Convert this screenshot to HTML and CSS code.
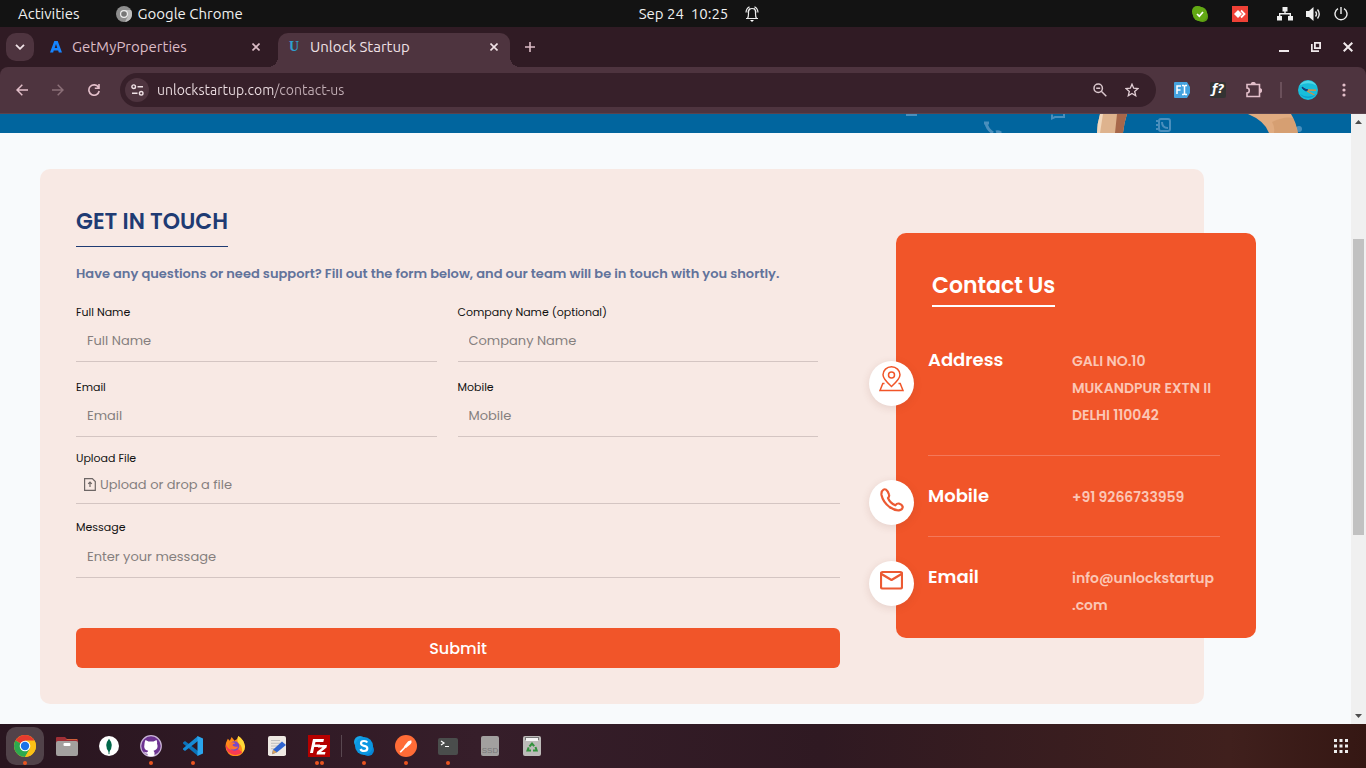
FILE: index.html
```html
<!DOCTYPE html>
<html lang="en">
<head>
<meta charset="utf-8">
<meta name="viewport" content="width=device-width, initial-scale=1">
<title>Unlock Startup</title>
<link rel="stylesheet" href="styles.css">
</head>
<body>
<header class="topbar">
  <div class="topbar-left">
    <button class="plain" type="button">Activities</button>
    <button class="plain app-menu" type="button">
      <svg width="16" height="16" viewBox="0 0 16 16"><circle cx="8" cy="8" r="8" fill="#8d8d8d"/><path d="M8 4h7a8 8 0 0 1-6 12l3-6z" fill="#bdbdbd"/><circle cx="8" cy="8" r="4" fill="#eee"/><circle cx="8" cy="8" r="2.8" fill="#777"/></svg>
      <span>Google Chrome</span>
    </button>
  </div>
  <div class="topbar-clock">
    <span>Sep 24&nbsp; 10:25</span>
    <svg width="14" height="16" viewBox="0 0 14 16" fill="none" stroke="#eee" stroke-width="1.2"><path d="M1 12.500h12M2.500 12.500Q3.500 11 3.500 7.500V6a3.500 3.500 0 0 1 7 0v1.500q0 3.500 1 5M1 6.500Q1.200 2.500 4.500 .8M13 6.500Q12.800 2.500 9.500 .8M3 6.500Q3 4 5 2.500M11 6.500Q11 4 9 2.500"/><path d="M5 14h4l-2 2z" fill="#fff" stroke="none"/></svg>
  </div>
  <div class="topbar-right">
    <svg width="16" height="16" viewBox="0 0 16 16"><rect width="11" height="11" rx="5" fill="#62a814"/><rect x="5" y="5" width="11" height="11" rx="5" fill="#5b9b12"/><circle cx="8" cy="8" r="7.300" fill="#62a814"/><path d="M5 8l2.300 2.200L11 6" fill="none" stroke="#fff" stroke-width="1.700"/></svg>
    <svg class="tray-red" width="16" height="16" viewBox="0 0 16 16"><path fill="#ef4136" d="M0 0h16v16H0z"/><path fill="#fff" d="M2 8l4-4 4 4-4 4z"/><path d="M9 4.500L12.500 8 9 11.500" fill="none" stroke="#fff" stroke-width="1.800"/></svg>
    <svg class="tray-net" width="16" height="14" viewBox="0 0 16 14" fill="#f0f0f0"><path d="M5.500 0h5v4.500H8.700V6H14v3h2v4.500h-5V9h1.600V7.400H3.400V9H5v4.500H0V9h2V6h5.300V4.500H5.500z"/></svg>
    <svg width="15" height="14" viewBox="0 0 15 14"><path fill="#f0f0f0" d="M0 4h3l4.500-4v14L3 10H0z"/><path d="M9.500 4.500q2 2.500 0 5M11.500 2.500q3.500 4.500 0 9" fill="none" stroke="#e8e8e8" stroke-width="1.400"/></svg>
    <svg width="14" height="14" viewBox="0 0 14 14" fill="none" stroke="#eee" stroke-width="1.400"><path d="M7 0v7M4 1.600a6 6 0 1 0 6 0"/></svg>
  </div>
</header>

<nav class="tabstrip" aria-label="Tabs">
  <button class="tab-search" type="button" aria-label="Search tabs"><svg width="10" height="6" viewBox="0 0 10 6" fill="none" stroke="#f0e2e6" stroke-width="1.800"><path d="M1 .8l4 4 4-4"/></svg></button>
  <div class="tab">
    <svg width="12" height="12" viewBox="0 0 12 12"><path fill="#1684ff" fill-rule="evenodd" d="M4.300 0h3.400L12 11.500H8.800L8.200 9.500H3.700L3.200 11.500H0zM6 3L4.700 7h2.600z"/></svg>
    <span class="tab-title">GetMyProperties</span>
    <button class="tab-close" type="button" aria-label="Close GetMyProperties"><svg width="8" height="8" viewBox="0 0 8 8" stroke="#dcbcc6" stroke-width="1.600"><path d="M.5.5l7 7M7.500.5l-7 7"/></svg></button>
  </div>
  <div class="tab tab-active">
    <span class="u-mark">U</span>
    <span class="tab-title">Unlock Startup</span>
    <button class="tab-close" type="button" aria-label="Close Unlock Startup"><svg width="8" height="8" viewBox="0 0 8 8" stroke="#f0e2e6" stroke-width="1.600"><path d="M.5.5l7 7M7.500.5l-7 7"/></svg></button>
  </div>
  <button class="new-tab" type="button" aria-label="New tab"><svg width="10" height="10" viewBox="0 0 10 10" stroke="#dcbcc6" stroke-width="1.600"><path d="M5 0v10M0 5h10"/></svg></button>
  <div class="window-buttons">
    <button type="button" aria-label="Minimize"><svg width="10" height="10" viewBox="0 0 10 10"><path fill="#f0e9eb" d="M0 8h10v2H0z"/></svg></button>
    <button type="button" aria-label="Restore"><svg width="10" height="10" viewBox="0 0 10 10" fill="none" stroke="#f0e9eb" stroke-width="1.800"><path d="M3.900.9h5.200v5.200H3.900z"/><path d="M.8 2v7.200H8"/></svg></button>
    <button type="button" aria-label="Close"><svg width="10" height="10" viewBox="0 0 10 10" stroke="#f0e9eb" stroke-width="2"><path d="M.7.7l8.600 8.600M9.300.7L.7 9.300"/></svg></button>
  </div>
</nav>

<div class="toolbar">
  <button class="tool" type="button" aria-label="Back"><svg width="12" height="12" viewBox="0 0 12 12" fill="none" stroke="#e3bfca" stroke-width="1.500"><path d="M12 6H1M6.300.7L1 6l5.300 5.300"/></svg></button>
  <button class="tool" type="button" aria-label="Forward"><svg width="12" height="12" viewBox="0 0 12 12" fill="none" stroke="#8b6f78" stroke-width="1.500"><path d="M0 6h11M5.700.7L11 6l-5.300 5.300"/></svg></button>
  <button class="tool" type="button" aria-label="Reload"><svg width="12" height="12" viewBox="0 0 12 12" fill="none" stroke="#e3bfca" stroke-width="1.600"><path d="M10.500 3.300A5.200 5.200 0 1 0 11.200 7M11 0v4.200H6.800"/></svg></button>
  <div class="omnibox">
    <button class="site-info" type="button" aria-label="Site information"><svg width="13" height="12" viewBox="0 0 13 12" fill="none" stroke="#f0e2e6" stroke-width="1.400"><circle cx="2.700" cy="2.700" r="1.800"/><path d="M6.500 2.700h5.500M1 9.300h5.500"/><circle cx="10.200" cy="9.300" r="1.800"/></svg></button>
    <input class="url" type="text" value="unlockstartup.com/contact-us" aria-label="Address">
    <button class="omni-action" type="button" aria-label="Zoom"><svg width="14" height="14" viewBox="0 0 14 14" fill="none" stroke="#d9c6cc" stroke-width="1.500"><circle cx="5.200" cy="5.200" r="4.200"/><path d="M8.300 8.300l5 5M3.200 5.200h4"/></svg></button>
    <button class="omni-action" type="button" aria-label="Bookmark"><svg width="14" height="14" viewBox="0 0 14 14" fill="none" stroke="#e3d0d6" stroke-width="1.300"><path d="M7 1.200l1.700 4 4.300.4-3.300 2.800 1 4.300L7 10.400l-3.700 2.300 1-4.300L1 5.600l4.300-.4z"/></svg></button>
  </div>
  <div class="extensions">
    <button class="tool" type="button" aria-label="Font extension"><svg width="16" height="16" viewBox="0 0 16 16"><path fill="#45a3df" d="M1 0h12l3 5v6l-3 5H1q-1 0-1-1V1q0-1 1-1z"/><path fill="none" stroke="#fff" stroke-width="1.500" d="M3 12V4h4M3 8h3.500M8 3.500h1.500l1 1 1-1H13M8 12.500h1.500l1-1 1 1H13M10.500 4.500v7"/></svg></button>
    <button class="tool" type="button" aria-label="Font finder"><span class="font-mark">ƒ?</span></button>
    <button class="tool" type="button" aria-label="Extensions"><svg width="16" height="16" viewBox="0 0 16 16" fill="none" stroke="#e3bfca" stroke-width="1.600"><path d="M1 2.500h12.500v12H1v-3.500c3 0 3-5 0-5z"/><path d="M5.500 2.500a1.800 1.800 0 0 1 3.600 0M13.500 6.700a1.800 1.800 0 0 1 0 3.600" fill="#e3bfca"/></svg></button>
    <span class="tool-divider"></span>
    <button class="tool" type="button" aria-label="Profile"><svg width="20" height="20" viewBox="0 0 20 20"><circle cx="10" cy="10" r="10" fill="#18bedb"/><path d="M1.500 5.500a10 10 0 0 1 17 0Q10 1 1.500 5.500z" fill="#4fd6e6"/><path d="M2 14q8 5 16 0a10 10 0 0 1-16 0z" fill="#0c9fd0"/><path d="M4 7l3 2 3 1-2 1-3-2z" fill="#153b79" stroke="#153b79"/><path d="M10 10l8 .2M9 11l7.500 4" stroke="#d89042" stroke-width="1.400"/></svg></button>
    <button class="tool" type="button" aria-label="Menu"><svg width="4" height="14" viewBox="0 0 4 14" fill="#e3bfca"><circle cx="2" cy="2" r="1.600"/><circle cx="2" cy="7" r="1.600"/><circle cx="2" cy="12" r="1.600"/></svg></button>
  </div>
</div>

<div class="viewport">
  <main class="page">
    <div class="banner">
      <svg width="451" height="19" viewBox="0 0 451 19">
        <g fill="none" stroke="#4a8fbd" stroke-width="2">
          <path d="M6 1h11M152 .5v4l3-1.500h9V0"/>
          <path d="M86 9q1 6 7 10" stroke-width="3"/><path d="M84 9h5M96 18q3-1 5 1" stroke-width="3"/>
          <rect x="259" y="5" width="11" height="12" rx="2"/><path d="M257 6v12" stroke-width="2" stroke-dasharray="2"/><path d="M262 8q0 6 6 6"/>
        </g>
        <circle cx="399" cy="15" r="3" fill="#4a8fbd"/>
        <path fill="#deb38e" d="M200 0h27q-3 9-4 19h-26q0-9 3-19z"/><path fill="#f2d8bd" d="M200 0h3l-3 19h-3q0-9 3-19z"/><path fill="#a7674a" d="M217 0h10q-3 9-4 19h-8z"/>
        <path fill="#e0ab80" d="M348 0h43q5 8 7 19h-29q-4-12-21-19z"/><path fill="#c98f5d" d="M372 8q12-6 21-4 3 7 5 15h-24q1-6-2-11z" opacity=".4"/>
      </svg>
    </div>
    <section class="contact-panel">
      <form class="contact-form">
        <h1 class="form-title">GET IN TOUCH</h1>
        <p class="form-intro">Have any questions or need support? Fill out the form below, and our team will be in touch with you shortly.</p>
        <div class="field-grid">
          <div class="field"><label for="full-name">Full Name</label><input id="full-name" type="text" placeholder="Full Name"></div>
          <div class="field"><label for="company">Company Name (optional)</label><input id="company" type="text" placeholder="Company Name"></div>
          <div class="field"><label for="email">Email</label><input id="email" type="email" placeholder="Email"></div>
          <div class="field"><label for="mobile">Mobile</label><input id="mobile" type="tel" placeholder="Mobile"></div>
        </div>
        <div class="field">
          <label for="upload">Upload File</label>
          <label class="upload" for="upload">
            <svg width="12" height="13" viewBox="0 0 12 13" fill="none" stroke="#6d6665" stroke-width="1.200"><path d="M.6.6h7.700l3 3v8.800H.6zM6 9V4.200M4.200 5.800L6 4l1.800 1.800"/></svg>
            <span>Upload or drop a file</span>
          </label>
          <input class="file-input" id="upload" type="file">
        </div>
        <div class="field"><label for="message">Message</label><textarea id="message" rows="1" placeholder="Enter your message"></textarea></div>
        <button class="submit" type="submit">Submit</button>
      </form>

      <aside class="contact-card">
        <h2 class="card-title">Contact Us</h2>
        <dl class="contact-list">
          <div class="contact-row contact-row-first">
            <dt>Address</dt>
            <dd>GALI NO.10 MUKANDPUR EXTN II DELHI 110042</dd>
            <dd class="bubble"><svg width="25" height="26" viewBox="0 0 25 26" fill="none" stroke="#f15529" stroke-width="1.500"><path d="M12.500 20.500Q4 13 4 8.800a8.500 8 0 0 1 17 0Q21 13 12.500 20.500z"/><circle cx="12.500" cy="9" r="3"/><path d="M5.500 17.500H3.800L1 24.500h23l-2.800-7h-1.700"/></svg></dd>
          </div>
          <div class="contact-row">
            <dt>Mobile</dt>
            <dd>+91 9266733959</dd>
            <dd class="bubble"><svg width="24" height="24" viewBox="0 0 24 24" fill="none" stroke="#ec5a33" stroke-width="2.200" stroke-linejoin="round"><path d="M3.500 1.600Q1 3 1.500 7q1.500 7 8 12 5 3.600 9.500 3.300 3.500-.6 3.800-3.300-.8-2.600-4-3.500-2-.2-3.500 1.800Q10 15 8 10q1.600-1.600 1-3.500Q8 3 6 1.600q-1.200-.7-2.500 0z"/></svg></dd>
          </div>
          <div class="contact-row">
            <dt>Email</dt>
            <dd>info@unlockstartup<wbr>.com</dd>
            <dd class="bubble"><svg width="23" height="21" viewBox="0 -2 23 21" fill="none" stroke="#ec5a33" stroke-width="2.200" stroke-linejoin="round"><rect x="1" y="1" width="21" height="16.500" rx="1.500"/><path d="M1.500 3l10 6 10-6"/></svg></dd>
          </div>
        </dl>
      </aside>
    </section>
  </main>
  <div class="scrollbar" aria-hidden="true">
    <svg width="7" height="4" viewBox="0 0 7 4"><path fill="#4d4d4d" d="M0 4l3.500-4L7 4z"/></svg>
    <div class="scroll-track"><div class="scroll-thumb"></div></div>
    <svg width="7" height="4" viewBox="0 0 7 4"><path fill="#4d4d4d" d="M0 0h7L3.500 4z"/></svg>
  </div>
</div>

<nav class="dock" aria-label="Dock">
  <button class="dock-item running current" type="button" aria-label="Chrome"><svg width="22" height="22" viewBox="0 0 22 22"><circle cx="11" cy="11" r="11" fill="#fbc116"/><path fill="#e33b2e" d="M11 11L1.500 5.500a11 11 0 0 1 19 0z"/><path fill="#2da94f" d="M11 11v0L1.500 5.500A11 11 0 0 0 11 22l5-8.500z"/><path fill="#fbc116" d="M11 5.500h9.500A11 11 0 0 1 11 22l5-8.500z"/><circle cx="11" cy="11" r="5.300" fill="#fff"/><circle cx="11" cy="11" r="4.200" fill="#1a73e8"/></svg></button>
  <button class="dock-item" type="button" aria-label="Files"><svg width="22" height="20" viewBox="0 0 22 20"><path fill="#a02f36" d="M0 2q0-1 1-1h8l2 2h10q1 0 1 1v4H0z"/><path fill="#d0603a" d="M11 3h10v1H10z"/><rect y="5" width="22" height="15" rx="2" fill="#a3a09f"/><rect x="7.500" y="7" width="7" height="3" rx="1" fill="#fff"/></svg></button>
  <button class="dock-item" type="button" aria-label="MongoDB Compass"><svg width="20" height="20" viewBox="0 0 21 21"><circle cx="10.500" cy="10.500" r="10.500" fill="#fff"/><path fill="#00684a" d="M10.500 3q6 7 0 14-6-7 0-14z"/><path stroke="#00684a" d="M10.500 15v4"/></svg></button>
  <button class="dock-item running" type="button" aria-label="GitHub Desktop"><svg width="22" height="22" viewBox="0 0 22 22"><circle cx="11" cy="11" r="10.300" fill="#6d3391" stroke="#c9b4d6" stroke-width="1.200"/><path fill="#fff" d="M5.500 5l3 1.500h5L16.500 5q1 2 .5 3.500 1.500 4-1 6-1 1-2.500 1.200l1 1.800v3.300q-3.500 1-7 0v-2q-3 .2-3.500-2.300 2 1.500 3.500.5l.7-1.300q-5-.7-3.700-7Q4.500 7 5.500 5z"/></svg></button>
  <button class="dock-item running" type="button" aria-label="Visual Studio Code"><svg width="20" height="20" viewBox="0 0 20 20"><path fill="#0b72b8" d="M0 6.500L2 5l13 10v5L0 7.500z"/><path fill="#168bd5" d="M0 13.500L2 15l13-10V0L0 12.500z"/><path fill="#2aa5ed" d="M14.500 0L20 2.500v15L14.500 20z"/></svg></button>
  <button class="dock-item" type="button" aria-label="Firefox"><svg width="20" height="20" viewBox="0 0 21 21"><path fill="#ff8a18" d="M2 5l1-2 2 2 2-4 3 4 3-2 1-3q6 4 7 11a10.200 10.200 0 0 1-20.500 0Q.5 7.500 2 5z"/><path fill="#f83b52" d="M1 9q3 8 13 5l4 3a10 10 0 0 1-17-8z"/><path fill="#ffda38" d="M14 0q6 4 7 11 0 4-3 7 1-7-4-11-2-3 0-7z"/><circle cx="10" cy="10.500" r="5" fill="#7849c9"/><path fill="#ff7430" d="M5 7q4-1 6 1-3 0-3 2 3 2 6 1-2 4-7 3-4-2-2-7z"/></svg></button>
  <button class="dock-item" type="button" aria-label="Text Editor"><svg width="18" height="20" viewBox="0 0 18 22" preserveAspectRatio="none"><rect width="18" height="22" rx="2" fill="#eee9e3"/><path d="M3 5h9M3 8h11M3 11h8M3 14h6" stroke="#bbb"/><path d="M14 6l4 4-9 8-5 2 1-5z" fill="#2e64d0"/><path fill="#d9a25b" d="M5 15l4 3-5 2z"/></svg></button>
  <button class="dock-item running running-two" type="button" aria-label="FileZilla"><svg width="22" height="22" viewBox="0 0 22 22"><path fill="#b50000" d="M0 0h22v22H0z"/><path fill="#fff" d="M5 4h11l-.7 3H7.500l-.6 2.500H12L11.400 12H6.200L5 18H2zM10 10h9l-.5 2.500L13 17h4.500l-.6 2.500H8.500l.6-2.700 5.400-4.300H10z"/></svg></button>
  <span class="dock-divider"></span>
  <button class="dock-item running" type="button" aria-label="Skype"><svg width="20" height="20" viewBox="0 0 20 20"><circle cx="6" cy="6" r="6" fill="#16a5e8"/><circle cx="14" cy="14" r="6" fill="#0786d7"/><circle cx="10" cy="10" r="9" fill="#0b97e2"/><path d="M13.200 6.500Q12.500 5 10 5 7 5 7 7.300q0 2 3 2.500 3.300.5 3.300 2.700Q13.300 15 10 15q-2.700 0-3.500-2" fill="none" stroke="#fff" stroke-width="2.200"/></svg></button>
  <button class="dock-item running" type="button" aria-label="Postman"><svg width="22" height="22" viewBox="0 0 21 21"><circle cx="10.500" cy="10.500" r="10.500" fill="#ff6c37"/><path d="M5 16.500L13 8" stroke="#fff" stroke-width="1.600"/><path d="M8.500 11l4-5 3-1q1 2-.5 3.500L10.500 12.500z" fill="#fff"/></svg></button>
  <button class="dock-item running" type="button" aria-label="Terminal"><svg width="20" height="17" viewBox="0 0 20 17"><rect width="20" height="17" rx="2" fill="#4a4d4c"/><path d="M3 3l3 2-3 2M7 8.500h4" fill="none" stroke="#fff" stroke-width="1.200"/></svg></button>
  <button class="dock-item" type="button" aria-label="Drive"><span class="ssd">SSD</span></button>
  <button class="dock-item" type="button" aria-label="Trash"><svg width="18" height="20" viewBox="0 0 18 20"><rect width="18" height="20" rx="2" fill="#bdbbb9"/><path fill="#777" d="M2 1h14v3H2z"/><path fill="#f5f5f5" d="M3 2h12v3H3z"/><path d="M6.500 10.500L9 7.500l2.200 2.700M12.500 11l1.200 3.500H10M8 14.500H4.500l1.200-3.200" fill="none" stroke="#33923d" stroke-width="2"/></svg></button>
  <button class="dock-item show-apps" type="button" aria-label="Show applications"><svg width="14" height="14" viewBox="0 0 14 14" fill="#eee"><path d="M0 0h3v3H0zM5.500 0h3v3h-3zM11 0h3v3h-3zM0 5.500h3v3H0zM5.500 5.500h3v3h-3zM11 5.500h3v3h-3zM0 11h3v3H0zM5.500 11h3v3h-3zM11 11h3v3h-3z"/></svg></button>
</nav>
</body>
</html>
```
FILE: styles.css
```css
* {
  box-sizing: border-box;
}

body {
  margin: 0;
  height: 100vh;
  display: flex;
  flex-direction: column;
  overflow: hidden;
  font-family: Ubuntu, "Noto Sans", sans-serif;
  font-size: 15px;
  color: #f0f0f0;
  background: #301b24;
}

button {
  border: 0;
  padding: 0;
  margin: 0;
  background: none;
  color: inherit;
  font: inherit;
}

svg {
  display: block;
  flex: none;
}

/* Desktop bar */
.topbar {
  flex: none;
  height: 27px;
  display: grid;
  grid-template-columns: 1fr auto 1fr;
  align-items: center;
  padding: 0 18px;
  background: #131313;
}

.topbar-left,
.topbar-clock,
.topbar-right,
.app-menu {
  display: flex;
  align-items: center;
}

.topbar-left {
  gap: 36px;
}

.app-menu {
  gap: 6px;
}

.topbar-clock {
  gap: 17px;
  padding-left: 32px;
}

.topbar-right {
  justify-content: flex-end;
  gap: 13px;
}

.tray-red {
  margin-left: 11px;
}

.tray-net {
  margin-left: 16px;
}

/* Tabs */
.tabstrip {
  flex: none;
  height: 40px;
  display: flex;
  align-items: center;
  padding: 0 5px 0 6px;
  background: #301b24;
}

.tab-search {
  width: 28px;
  height: 28px;
  border-radius: 10px;
  display: grid;
  place-items: center;
  background: #4e343f;
}

.tab {
  width: 232px;
  height: 34px;
  align-self: flex-end;
  display: flex;
  align-items: center;
  gap: 10px;
  margin-left: 6px;
  padding: 0 12px 6px 10px;
  color: #dcbcc6;
}

.tab-active {
  position: relative;
  border-radius: 10px 10px 0 0;
  background: #4e343f;
  color: #f0e2e6;
}

.tab-active::before,
.tab-active::after {
  content: "";
  position: absolute;
  bottom: 0;
  width: 10px;
  height: 10px;
}

.tab-active::before {
  left: -10px;
  background: radial-gradient(circle at 0 0, #301b24 10px, #4e343f 10px);
}

.tab-active::after {
  right: -10px;
  background: radial-gradient(circle at 100% 0, #301b24 10px, #4e343f 10px);
}

.tab-title {
  flex: 1;
  line-height: 16px;
}

.tab-close,
.new-tab {
  display: grid;
  place-items: center;
}

.new-tab {
  margin-left: 15px;
}

.u-mark {
  width: 12px;
  text-align: center;
  font: bold 14px "Liberation Serif", serif;
  color: #2f9fd0;
}

.window-buttons {
  margin-left: auto;
  display: flex;
}

.window-buttons button {
  width: 32px;
  height: 28px;
  padding-left: 6px;
  display: grid;
  place-items: center;
}

/* Toolbar */
.toolbar {
  flex: none;
  height: 47px;
  display: flex;
  align-items: center;
  padding: 0 4px;
  border-radius: 8px 8px 0 0;
  border-bottom: 1px solid #5b434d;
  background: #4e343f;
}

.tool {
  width: 36px;
  height: 34px;
  display: grid;
  place-items: center;
}

.omnibox {
  flex: 1;
  height: 34px;
  display: flex;
  align-items: center;
  margin: 0 8px;
  padding: 0 8px 0 5px;
  border-radius: 17px;
  background: #37202a;
}

.site-info {
  width: 24px;
  height: 24px;
  display: grid;
  place-items: center;
  border-radius: 50%;
  background: #4e343f;
}

.url {
  flex: 1;
  min-width: 0;
  margin-left: 8px;
  padding: 0;
  border: 0;
  outline: 0;
  font: inherit;
  font-size: 14px;
  color: #e8dadf;
  background: linear-gradient(90deg, #f0e2e6 118px, #c3afb6 118px);
  background-clip: text;
  -webkit-background-clip: text;
  -webkit-text-fill-color: transparent;
}

.omni-action {
  width: 32px;
  height: 32px;
  display: grid;
  place-items: center;
}

.extensions {
  display: flex;
  align-items: center;
}

.font-mark {
  width: 16px;
  height: 16px;
  border-radius: 2px;
  background: #333;
  color: #fff;
  font: italic bold 12px/15px "DejaVu Sans", sans-serif;
  text-align: center;
}

.tool-divider {
  width: 2px;
  height: 16px;
  margin: 0 8px;
  background: #6b505b;
}

/* Web page */
.viewport {
  flex: 1;
  min-height: 0;
  display: flex;
  font-family: Poppins, Inter, sans-serif;
}

.page {
  flex: 1;
  min-width: 0;
  overflow: hidden;
  background: #f8fafc;
}

.banner {
  height: 19px;
  display: flex;
  justify-content: flex-end;
  background: #01659e;
}

.contact-panel {
  display: flex;
  align-items: flex-start;
  gap: 56px;
  margin: 36px 147px 20px 40px;
  padding: 36px 0 36px 36px;
  border-radius: 10px;
  background: #f8e9e4;
}

.contact-form {
  flex: 1;
  min-width: 0;
  display: flex;
  flex-direction: column;
  align-items: stretch;
}

.form-title {
  align-self: flex-start;
  margin: 0;
  padding-bottom: 7px;
  border-bottom: 1px solid #1f3b73;
  font-size: 22px;
  line-height: 34px;
  font-weight: 600;
  color: #1f3b73;
}

.form-intro {
  margin: 17px 0 20px;
  font-size: 13px;
  line-height: 20px;
  font-weight: 600;
  color: #62739b;
}

.field-grid {
  display: grid;
  grid-template-columns: 1fr 1fr;
  gap: 17px 21px;
  margin: 0 22px 13px 0;
}

.field {
  display: flex;
  flex-direction: column;
  position: relative;
  font-size: 11px;
  line-height: 16px;
  color: #111;
}

.field input:not(.file-input),
.field textarea,
.upload {
  width: 100%;
  height: 42px;
  border: 0;
  border-bottom: 1px solid #d4c5c2;
  outline: 0;
  padding: 0 11px;
  background: none;
  font: 13px/20px Poppins, Inter, sans-serif;
  color: #757575;
}

.field textarea {
  height: 43px;
  padding: 12px 11px 10px;
  resize: none;
  overflow: hidden;
}

.field ::placeholder {
  color: #857f7e;
  opacity: 1;
}

.field .upload {
  display: flex;
  align-items: center;
  gap: 4px;
  height: 38px;
  margin-bottom: 15px;
  padding: 0 8px;
  color: #857f7e;
}

.file-input {
  position: absolute;
  width: 1px;
  height: 1px;
  opacity: 0;
}

.submit {
  height: 40px;
  margin-top: 50px;
  border-radius: 6px;
  background: #f15529;
  color: #fff;
  font-size: 16px;
  font-weight: 500;
}

.contact-card {
  flex: none;
  width: 360px;
  margin: 28px -52px 0 0;
  padding: 36px 36px 19px 32px;
  border-radius: 10px;
  background: #f15529;
  color: #fff;
}

.card-title {
  width: fit-content;
  margin: 0 0 41px 4px;
  padding-bottom: 3px;
  border-bottom: 2px solid #fff;
  font-size: 22px;
  line-height: 33px;
  font-weight: 600;
}

.contact-list {
  margin: 0;
}

.contact-row {
  position: relative;
  display: grid;
  grid-template-columns: 144px 1fr;
  padding: 28px 0 25px;
  border-bottom: 1px solid #f4785a;
}

.contact-row-first {
  padding: 0 0 26px;
}

.contact-row:last-child {
  padding-bottom: 0;
  border-bottom: 0;
}

.contact-row dt {
  font-size: 18px;
  line-height: 24px;
  font-weight: 600;
}

.contact-row dd {
  margin: 0;
  font-size: 14px;
  line-height: 27px;
  font-weight: 600;
  color: #fbc6b5;
}

.contact-row .bubble {
  position: absolute;
  left: -59px;
  top: 24px;
  width: 45px;
  height: 45px;
  display: flex;
  justify-content: center;
  padding-top: 8px;
  border-radius: 50%;
  background: #fff;
  box-shadow: 0 2px 8px rgba(120, 60, 40, 0.14);
}

.contact-row-first .bubble {
  top: 13px;
  padding-top: 5px;
}

.scrollbar {
  flex: none;
  width: 15px;
  display: flex;
  flex-direction: column;
  align-items: center;
  padding: 6px 0;
  background: #f0f0f0;
}

.scroll-track {
  flex: 1;
  align-self: stretch;
  margin: 6px 2px;
  padding-top: 109px;
}

.scroll-thumb {
  height: 296px;
  background: #c1c1c1;
}

/* Dock */
.dock {
  flex: none;
  height: 44px;
  display: flex;
  align-items: center;
  gap: 4px;
  padding: 0 6px;
  background: linear-gradient(90deg, #29151f, #361e2a 35%, #2f1922 60%, #40201d 90%, #351713);
}

.dock-item {
  position: relative;
  width: 38px;
  height: 38px;
  display: grid;
  place-items: center;
  border-radius: 10px;
}

.current {
  background: #514249;
}

.running::after {
  content: "";
  position: absolute;
  bottom: 0;
  left: 17px;
  width: 4px;
  height: 4px;
  border-radius: 50%;
  background: #e95420;
}

.running-two::after {
  left: 15px;
  box-shadow: 5px 0 0 #e95420;
}

.dock-divider {
  width: 1px;
  height: 22px;
  margin: 0 -1px;
  background: #594750;
}

.ssd {
  width: 18px;
  height: 20px;
  padding-top: 10px;
  border-radius: 2px;
  background: #a2a09f;
  color: #777;
  font: 8px/10px "Liberation Sans", sans-serif;
}

.show-apps {
  margin-left: auto;
}
```
